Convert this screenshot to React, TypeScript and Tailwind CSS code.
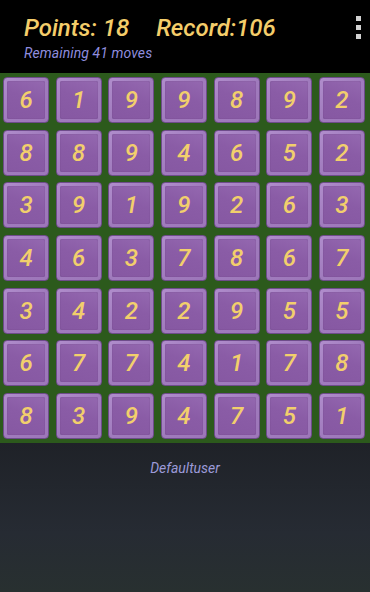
const board = [
  [6, 1, 9, 9, 8, 9, 2],
  [8, 8, 9, 4, 6, 5, 2],
  [3, 9, 1, 9, 2, 6, 3],
  [4, 6, 3, 7, 8, 6, 7],
  [3, 4, 2, 2, 9, 5, 5],
  [6, 7, 7, 4, 1, 7, 8],
  [8, 3, 9, 4, 7, 5, 1],
];

// Плитка с "выпуклым" ободком
const Tile = ({ value }: { value: number }) => (
  <div className="flex h-[46px] w-[46px] rounded-[4px] border border-[#6e4c8a] bg-[linear-gradient(135deg,#b08dcc,#a07bbd_50%,#9d76b9)] p-[3px]">
    <div className="flex flex-1 items-center justify-center rounded-[2px] bg-[linear-gradient(200deg,#9468b0,#8a5ca6_45%,#8658a2)] shadow-[inset_0_0_1px_rgba(70,40,95,0.6)]">
      <span className="text-[24px] font-medium italic leading-none text-[#f2cf6c]">{value}</span>
    </div>
  </div>
);

export default function App() {
  return (
    <div
      className="flex h-[592px] w-[370px] flex-col overflow-hidden bg-black"
      style={{ fontFamily: 'Roboto, "Noto Sans", sans-serif' }}
    >
      {/* Шапка: очки, рекорд, меню */}
      <div className="relative h-[73px] bg-black pl-[24px] pt-[13px]">
        <div className="flex items-baseline gap-[27px] text-[24px] font-medium italic leading-[30px] text-[#f4cd6a]">
          <span>Points: 18</span>
          <span>Record:106</span>
        </div>
        <div className="mt-[2px] text-[14px] italic leading-[16px] tracking-[0.1px] text-[#8f8ddf]">
          Remaining 41 moves
        </div>
        <div className="absolute right-[9px] top-[16px] flex flex-col gap-[4px]">
          <span className="h-[5px] w-[5px] bg-[#d2d2d2]" />
          <span className="h-[5px] w-[5px] bg-[#d2d2d2]" />
          <span className="h-[5px] w-[5px] bg-[#d2d2d2]" />
        </div>
      </div>

      {/* Поле */}
      <div className="grid grid-cols-[repeat(7,46px)] gap-[6.67px] bg-[#2c5a1c] py-[4px] pl-[3px]">
        {board.flat().map((v, i) => (
          <Tile key={i} value={v} />
        ))}
      </div>

      {/* Низ */}
      <div className="flex flex-1 justify-center bg-[linear-gradient(180deg,#1f2228,#262b33_60%,#283030)] pt-[16px]">
        <span className="text-[14px] italic leading-[18px] text-[#9c9ad8]">Defaultuser</span>
      </div>
    </div>
  );
}
